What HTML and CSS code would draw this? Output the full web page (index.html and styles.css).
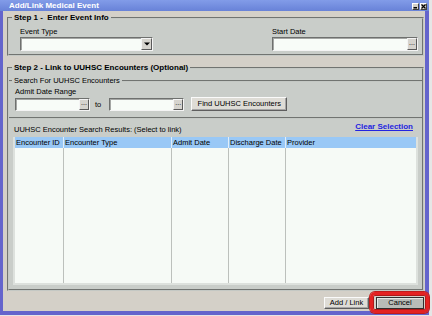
FILE: index.html
```html
<!DOCTYPE html>
<html lang="en">
<head>
    <meta charset="UTF-8">
    <meta name="viewport" content="width=device-width, initial-scale=1.0">
    <title>Add/Link Medical Event</title>
    <link rel="stylesheet" href="styles.css">
</head>
<body>

    <div class="window">
        <!-- Title bar -->
        <div class="titlebar">
            <span class="title">Add/Link Medical Event</span>
            <span class="title-buttons">
                <span class="title-btn">
                    <svg width="5" height="5" viewBox="0 0 5 5"><rect x="0.5" y="3" width="3.5" height="1.5" fill="#000"/></svg>
                </span>
                <span class="title-btn">
                    <svg width="5" height="5" viewBox="0 0 5 5"><path d="M0.5 0.5 L4.5 4.5 M4.5 0.5 L0.5 4.5" stroke="#000" stroke-width="1.2"/></svg>
                </span>
            </span>
        </div>

        <div class="content">
            <!-- Step 1 -->
            <fieldset class="panel step-one">
                <legend>Step 1 -&nbsp; Enter Event Info</legend>
                <div class="step-one-body">
                    <div class="field">
                        <label>Event Type</label>
                        <div class="combo">
                            <span class="combo-button">
                                <svg width="6" height="4" viewBox="0 0 6 4"><polygon points="0,0.5 6,0.5 3,3.5" fill="#000"/></svg>
                            </span>
                        </div>
                    </div>
                    <div class="field">
                        <label>Start Date</label>
                        <div class="datebox wide"><span class="dots-button">...</span></div>
                    </div>
                </div>
            </fieldset>

            <!-- Step 2 -->
            <fieldset class="panel step-two">
                <legend>Step 2 - Link to UUHSC Encounters (Optional)</legend>

                <fieldset class="search">
                    <legend>Search For UUHSC Encounters</legend>
                    <div class="search-body">
                        <label>Admit Date Range</label>
                        <div class="range-row">
                            <div class="datebox short"><span class="dots-button">...</span></div>
                            <span class="to">to</span>
                            <div class="datebox short"><span class="dots-button">...</span></div>
                            <button class="btn find">Find UUHSC Encounters</button>
                        </div>
                    </div>
                </fieldset>

                <div class="results-head">
                    <span class="results-label">UUHSC Encounter Search Results: (Select to link)</span>
                    <a class="clear-link">Clear Selection</a>
                </div>

                <div class="grid">
                    <div class="grid-head">
                        <span>Encounter ID</span>
                        <span>Encounter Type</span>
                        <span>Admit Date</span>
                        <span>Discharge Date</span>
                        <span>Provider</span>
                    </div>
                    <div class="grid-body">
                        <span></span><span></span><span></span><span></span><span></span>
                    </div>
                </div>
            </fieldset>

            <!-- Dialog buttons -->
            <div class="footer">
                <button class="btn add-link">Add / Link</button>
                <span class="highlight">
                    <button class="btn cancel">Cancel</button>
                </span>
            </div>
        </div>
    </div>

</body>
</html>
```

FILE: styles.css
```css
* {
    box-sizing: border-box;
}

body {
    margin: 0;
    background-color: #e6e6e6;
    font-family: "Liberation Sans", Arial, sans-serif;
    font-size: 7.5px;
    color: #000;
    overflow: hidden;
}

/* Window frame */
.window {
    width: 429px;
    height: 315px;
    background-color: #6464cc;
    padding: 0 4px 4px 3px;
    display: flex;
    flex-direction: column;
}

.titlebar {
    height: 11px;
    margin: 0 -4px 0 -3px;
    padding: 1px 2px 0 9px;
    background: linear-gradient(#829ce8, #6882d8);
    display: flex;
    align-items: center;
    justify-content: space-between;
}

.title {
    color: #fff;
    font-weight: bold;
    font-size: 8px;
    line-height: 10px;
}

.title-buttons {
    display: flex;
    gap: 1px;
}

.title-btn {
    width: 7px;
    height: 7px;
    background-color: #d4d0c8;
    border: 1px solid;
    border-color: #fff #404040 #404040 #fff;
    display: flex;
    align-items: center;
    justify-content: center;
}

.content {
    flex: 1;
    background-color: #d4d0c8;
    padding: 2px 1px 0 4px;
    display: flex;
    flex-direction: column;
}

/* Group boxes */
.panel {
    margin: 0;
    padding: 0;
    min-width: 0;
    border: 2px groove #c4c8c4;
    background-color: #c9cdc9;
}

.panel > legend {
    margin-left: 3px;
    padding: 0 2px;
    font-weight: bold;
    font-size: 8px;
    line-height: 10px;
}

.step-one-body {
    display: flex;
    justify-content: space-between;
    padding: 4px 4px 3px 11px;
}

.field label {
    display: block;
    line-height: 9px;
    margin-bottom: 1px;
}

/* Inputs */
.combo,
.datebox {
    height: 14px;
    background-color: #f8fcf8;
    border: 1px solid;
    border-color: #6e706e #f4f4f4 #f4f4f4 #6e706e;
    box-shadow: inset 1px 1px 0 #a4a6a4;
    display: flex;
    justify-content: flex-end;
    align-items: center;
}

.combo {
    width: 133px;
}

.datebox.wide {
    width: 146px;
}

.datebox.short {
    width: 75px;
    height: 13px;
}

.combo-button,
.dots-button {
    height: 12px;
    background-color: #d6d4ce;
    border: 1px solid;
    border-color: #f4f4f4 #5a5a5a #5a5a5a #f4f4f4;
    display: flex;
    align-items: center;
    justify-content: center;
}

.combo-button {
    width: 11px;
}

.dots-button {
    width: 10px;
    font-size: 7px;
    line-height: 8px;
    align-items: flex-end;
    padding-bottom: 2px;
}

.datebox.short .dots-button {
    height: 11px;
}

/* Step 2 */
.step-two {
    flex: 1;
    margin-top: 7px;
    padding-bottom: 4px;
    display: flex;
    flex-direction: column;
}

.search {
    margin: 3px 0 0;
    padding: 0;
    min-width: 0;
    border: 2px groove #c4c8c4;
    border-left: 0;
    border-right: 0;
}

.search > legend {
    margin-left: 3px;
    padding: 0 2px;
    line-height: 9px;
}

.search-body {
    padding: 2px 0 6px 6px;
}

.search-body label {
    display: block;
    line-height: 9px;
    margin-bottom: 1px;
}

.range-row {
    display: flex;
    align-items: center;
    height: 14px;
}

.to {
    margin: 0 8px 0 5px;
}

/* Buttons */
.btn {
    font: inherit;
    color: #000;
    height: 12px;
    padding: 0;
    line-height: 10px;
    background-color: #dedcd6;
    border: 1px solid;
    border-color: #fafafa #5e5e5e #5e5e5e #fafafa;
    box-shadow: inset -1px -1px 0 #a6a6a6;
}

.find {
    width: 96px;
    height: 14px;
    margin-left: 7px;
}

.results-head {
    height: 12px;
    margin-top: 3px;
    padding: 0 9px 0 5px;
    display: flex;
    justify-content: space-between;
}

.results-label {
    align-self: flex-end;
    line-height: 9px;
}

.clear-link {
    align-self: flex-start;
    color: #2424e0;
    font-weight: bold;
    font-size: 8px;
    line-height: 10px;
    text-decoration: underline;
}

/* Results grid */
.grid {
    flex: 1;
    margin: 3px 4px 0;
    border: 2px solid #dde1dd;
    border-top: 0;
    background-color: #f6faf6;
    display: flex;
    flex-direction: column;
}

.grid-head,
.grid-body {
    display: grid;
    grid-template-columns: 49px 108px 57px 57px 1fr;
}

.grid-head {
    height: 11px;
    background-color: #99c8f6;
}

.grid-head span {
    padding-left: 1px;
    line-height: 11px;
    border-right: 1px solid #e2eefa;
}

.grid-body {
    flex: 1;
}

.grid-body span {
    border-right: 1px solid #bcc0bc;
}

.grid-head span:last-child,
.grid-body span:last-child {
    border-right: 0;
}

/* Footer */
.footer {
    height: 20px;
    padding-top: 1px;
    display: flex;
    justify-content: flex-end;
    align-items: flex-start;
}

.add-link {
    width: 45px;
    margin-top: 5px;
    margin-right: 1px;
}

.highlight {
    display: flex;
    margin-right: -5px;
    padding: 2px 2px 1px 3px;
    border: 3px solid #e42222;
    border-radius: 5px;
    box-shadow: inset 0 0 0 1px #b01818, 0 0 0 1px #c01c1c;
}

.cancel {
    width: 48px;
    background-color: #b8bcb8;
    border-color: #303030;
    box-shadow: inset 1px 1px 0 #e8e8e8;
}
```
